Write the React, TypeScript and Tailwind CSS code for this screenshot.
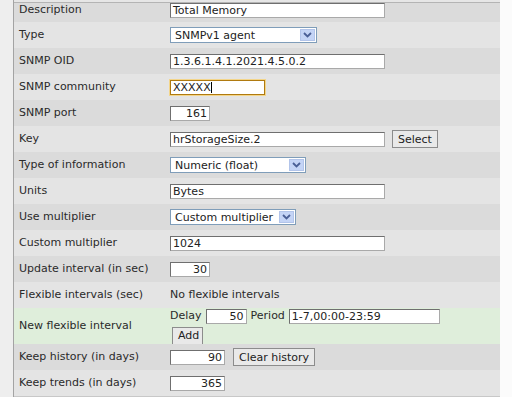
import React from 'react';

const FONT = "font-['DejaVu_Sans',Verdana,sans-serif]";

interface RowProps {
  label: string;
  dark?: boolean;
  className?: string;
  children?: React.ReactNode;
}

function Row({ label, dark, className, children }: RowProps) {
  const bg = dark ? 'bg-[#dbdbdb]' : 'bg-[#e4e4e4]';
  return (
    <div className={`flex items-center ${bg} ${className ?? 'h-[26px]'}`}>
      <div className="w-[156px] shrink-0 pl-[5px] text-[#2a2a2a]">{label}</div>
      <div className="flex items-center gap-[7px]">{children}</div>
    </div>
  );
}

function TextBox({ value, width, right, focus }: { value: string; width: number; right?: boolean; focus?: boolean }) {
  const border = focus
    ? 'border-[#b07a10] shadow-[0_0_0_1px_#f3d58a]'
    : 'border-t-[#6f6f6f] border-l-[#6f6f6f] border-r-[#a9a9a9] border-b-[#a9a9a9]';
  return (
    <div
      className={`h-[15px] bg-white border flex items-center px-[2px] text-[#222] leading-none ${border} ${right ? 'justify-end' : ''}`}
      style={{ width }}
    >
      <span>{value}</span>
      {focus && <span className="w-px h-[11px] bg-black" />}
    </div>
  );
}

function Dropdown({ value, width }: { value: string; width: number }) {
  return (
    <div
      className="h-[16px] bg-white border border-[#7f9db9] flex items-center justify-between pl-[4px] pr-px text-[#222] leading-none"
      style={{ width }}
    >
      <span>{value}</span>
      <div className="w-[15px] h-[12px] bg-[#c4d4f6] border border-[#b2c4ea] flex items-center justify-center">
        <svg width="9" height="6" viewBox="0 0 9 6">
          <path d="M1 1 L4.5 4.5 L8 1" stroke="#4a5f96" strokeWidth="1.8" fill="none" />
        </svg>
      </div>
    </div>
  );
}

function Btn({ label, className }: { label: string; className?: string }) {
  return (
    <div
      className={`h-[18px] px-[5px] bg-[#e9e9e9] border border-[#8c8c8c] flex items-center text-[#222] leading-none ${className ?? ''}`}
    >
      {label}
    </div>
  );
}

export default function App() {
  return (
    <div className={`${FONT} text-[11px] w-[512px] h-[397px] overflow-hidden bg-[#fbfbfb] flex`}>
      <div className="w-[13px] shrink-0 bg-[#eeeeee] border-r border-[#a3a3a3] box-content" />
      <div className="w-[486px] flex flex-col">
        <div className="h-[2px] bg-[#e6e6e6]" />
        <div className="h-px bg-[#b4b4b4]" />
        <Row label="Description" dark className="h-[19px] pb-[5px]">
          <TextBox value="Total Memory" width={215} />
        </Row>
        <Row label="Type">
          <Dropdown value="SNMPv1 agent" width={147} />
        </Row>
        <Row label="SNMP OID" dark>
          <TextBox value="1.3.6.1.4.1.2021.4.5.0.2" width={215} />
        </Row>
        <Row label="SNMP community">
          <TextBox value="XXXXX" width={95} focus />
        </Row>
        <Row label="SNMP port" dark>
          <TextBox value="161" width={40} right />
        </Row>
        <Row label="Key">
          <TextBox value="hrStorageSize.2" width={215} />
          <Btn label="Select" />
        </Row>
        <Row label="Type of information" dark>
          <Dropdown value="Numeric (float)" width={136} />
        </Row>
        <Row label="Units">
          <TextBox value="Bytes" width={215} />
        </Row>
        <Row label="Use multiplier" dark>
          <Dropdown value="Custom multiplier" width={126} />
        </Row>
        <Row label="Custom multiplier">
          <TextBox value="1024" width={215} />
        </Row>
        <Row label="Update interval (in sec)" dark>
          <TextBox value="30" width={40} right />
        </Row>
        <Row label="Flexible intervals (sec)">
          <span className="text-[#2a2a2a]">No flexible intervals</span>
        </Row>
        <div className="flex items-center bg-[#dfeedb] h-[36px]">
          <div className="w-[156px] shrink-0 pl-[5px] text-[#2a2a2a]">New flexible interval</div>
          <div className="flex flex-col gap-[2px] pt-[1px]">
            <div className="flex items-center gap-[4px] text-[#2a2a2a]">
              <span>Delay</span>
              <TextBox value="50" width={41} right />
              <span>Period</span>
              <TextBox value="1-7,00:00-23:59" width={151} />
            </div>
            <Btn label="Add" className="w-[31px] ml-[2px] h-[17px]" />
          </div>
        </div>
        <Row label="Keep history (in days)" dark>
          <TextBox value="90" width={55} right />
          <Btn label="Clear history" className="ml-[1px]" />
        </Row>
        <Row label="Keep trends (in days)">
          <TextBox value="365" width={55} right />
        </Row>
        <div className="h-px bg-[#c8c8c8]" />
      </div>
    </div>
  );
}
